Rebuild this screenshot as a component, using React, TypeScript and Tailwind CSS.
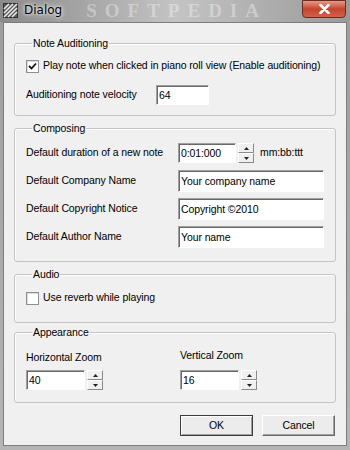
import { ReactNode } from "react";

const sunken = "bg-white border border-t-[#a0a0a0] border-l-[#a0a0a0] border-b-white border-r-white shadow-[inset_1px_1px_0_#696969]";

function Group({ title, children, className }: { title: string; children: ReactNode; className?: string }) {
    return (
        <fieldset className={`border border-[#c4c4c4] rounded-[3px] shadow-[inset_1px_1px_0_white] px-[11px] ${className || ""}`}>
            <legend className="ml-[6px] px-[1px] leading-[14px]">{title}</legend>
            {children}
        </fieldset>
    )
}

function Checkbox({ checked }: { checked?: boolean }) {
    return (
        <div className="w-[13px] h-[13px] shrink-0 bg-white border border-[#8e8f8f] shadow-[inset_1px_1px_0_#dcdcdc] flex items-center justify-center">
            {checked ? (
                <svg width="9" height="9" viewBox="0 0 9 9">
                    <path d="M1 4 L3.5 6.5 L8 1.5" stroke="#111" strokeWidth="1.8" fill="none" />
                </svg>
            ) : null}
        </div>
    )
}

function SpinHalf({ up }: { up?: boolean }) {
    return (
        <div className="flex-1 bg-[#f0f0f0] border border-t-white border-l-white border-b-[#8a8a8a] border-r-[#8a8a8a] flex items-center justify-center">
            <svg width="5" height="3" viewBox="0 0 5 3">
                <path d={up ? "M0 3 L2.5 0 L5 3 Z" : "M0 0 L2.5 3 L5 0 Z"} fill="#222" />
            </svg>
        </div>
    )
}

function Spin({ value, width }: { value: string; width: string }) {
    return (
        <div className={`flex h-[20px] ${width}`}>
            <div className={`flex-1 ${sunken} pl-[2px] leading-[18px]`}>{value}</div>
            <div className="w-[16px] flex flex-col ml-[2px]">
                <SpinHalf up />
                <SpinHalf />
            </div>
        </div>
    )
}

function TextRow({ label, value }: { label: string; value: string }) {
    return (
        <div className="flex items-center h-[22px]">
            <div className="w-[152px]">{label}</div>
            <div className={`w-[146px] h-[22px] ${sunken} pl-[2px] leading-[20px]`}>{value}</div>
        </div>
    )
}

export default function App() {
    return (
        <div className="w-[350px] h-[450px] bg-gradient-to-b from-[#9c9c9c] to-[#b5b5b5] flex flex-col font-['Liberation_Sans',Arial,sans-serif] text-[10.5px] tracking-[-0.1px] text-black overflow-hidden whitespace-nowrap">
            <div className="h-[22px] flex items-start bg-gradient-to-r from-[#8a8a8a] via-[#c4c4c4] to-[#9a9a9a]">
                <svg width="15" height="15" viewBox="0 0 15 15" className="ml-[3px] mt-[3px] shrink-0">
                    <rect x="0.5" y="0.5" width="14" height="14" fill="#5a5a5a" stroke="#333" />
                    <path d="M1 6 L6 1 M1 10 L10 1 M1 14 L14 1 M5 14 L14 5 M9 14 L14 9" stroke="#e8e8e8" strokeWidth="1.6" />
                </svg>
                <div className="ml-[6px] mt-[3px] text-[12px] tracking-normal leading-[15px] font-['DejaVu_Sans',sans-serif] text-black [text-shadow:0_0_6px_white,0_0_3px_white]">Dialog</div>
                <div className="ml-[24px] shrink-0 font-['Liberation_Serif',serif] font-bold text-[19px] tracking-[8px] leading-[22px] text-white/35">SOFTPEDIA</div>
                <div className="ml-auto mr-[4px] w-[44px] h-[18px] shrink-0 rounded-b-[4px] border border-[#6b2a22] bg-gradient-to-b from-[#e49a8a] via-[#c7432d] to-[#d0614a] flex items-center justify-center">
                    <svg width="11" height="10" viewBox="0 0 11 10">
                        <path d="M1.5 1 L9.5 9 M9.5 1 L1.5 9" stroke="#fff" strokeWidth="2.6" strokeLinecap="round" />
                    </svg>
                </div>
            </div>
            <div className="flex-1 ml-[3px] mr-[3px] mb-[4px] bg-[#f0f0f0] border border-[#7d7d7d] px-[10px] pt-[13px] flex flex-col">
                <Group title="Note Auditioning" className="pt-[9px] pb-[10px]">
                    <div className="flex items-center h-[14px]">
                        <Checkbox checked />
                        <div className="ml-[4px]">Play note when clicked in piano roll view (Enable auditioning)</div>
                    </div>
                    <div className="flex items-center mt-[12px]">
                        <div className="w-[130px]">Auditioning note velocity</div>
                        <div className={`w-[53px] h-[20px] ${sunken} pl-[2px] leading-[18px]`}>64</div>
                    </div>
                </Group>

                <Group title="Composing" className="mt-[5px] pt-[7px] pb-[13px]">
                    <div className="flex items-center h-[22px]">
                        <div className="w-[152px]">Default duration of a new note</div>
                        <Spin value="0:01:000" width="w-[76px]" />
                        <div className="ml-[6px]">mm:bb:ttt</div>
                    </div>
                    <div className="flex flex-col gap-[6px] mt-[6px]">
                        <TextRow label="Default Company Name" value="Your company name" />
                        <TextRow label="Default Copyright Notice" value="Copyright ©2010" />
                        <TextRow label="Default Author Name" value="Your name" />
                    </div>
                </Group>

                <Group title="Audio" className="mt-[5px] pt-[10px] pb-[17px]">
                    <div className="flex items-center h-[14px]">
                        <Checkbox />
                        <div className="ml-[4px]">Use reverb while playing</div>
                    </div>
                </Group>

                <Group title="Appearance" className="mt-[2px] pt-[9px] pb-[12px]">
                    <div className="flex">
                        <div className="w-[154px] flex flex-col">
                            <div className="h-[14px] mt-[2px]">Horizontal Zoom</div>
                            <div className="mt-[6px]"><Spin value="40" width="w-[77px]" /></div>
                        </div>
                        <div className="flex flex-col">
                            <div className="h-[14px]">Vertical Zoom</div>
                            <div className="mt-[8px]"><Spin value="16" width="w-[77px]" /></div>
                        </div>
                    </div>
                </Group>

                <div className="flex justify-end gap-[9px] mt-[12px] mr-[1px]">
                    <button className="w-[73px] h-[21px] bg-[#ececec] border border-[#3c3c3c] shadow-[inset_1px_1px_0_white,inset_-1px_-1px_0_#a0a0a0]">OK</button>
                    <button className="w-[73px] h-[21px] bg-[#ececec] border border-t-white border-l-white border-b-[#6a6a6a] border-r-[#6a6a6a] shadow-[inset_-1px_-1px_0_#a0a0a0]">Cancel</button>
                </div>
            </div>
        </div>
    )
}
